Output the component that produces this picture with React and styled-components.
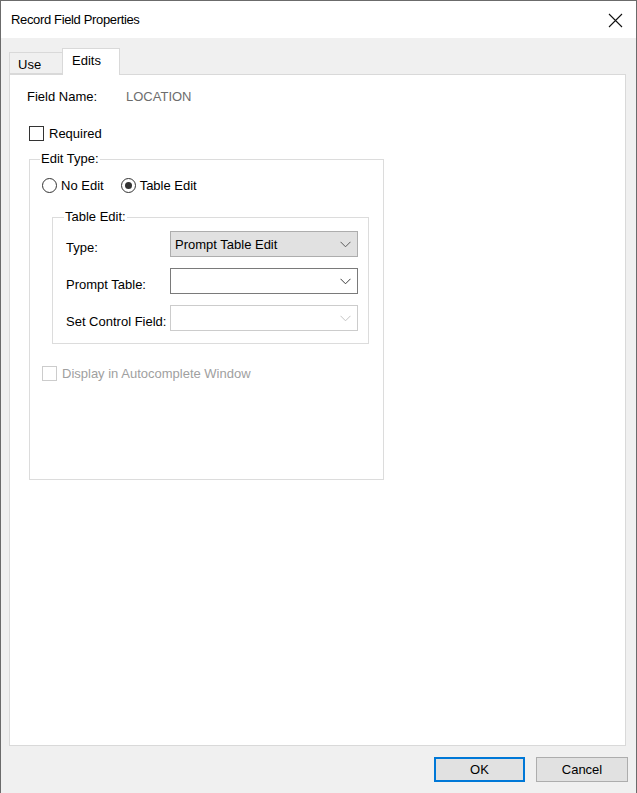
import React from 'react'
import styled, { createGlobalStyle } from 'styled-components'

const GlobalStyle = createGlobalStyle`
  html, body {
    margin: 0;
    padding: 0;
    background: #ffffff;
  }
  body {
    font-family: "Liberation Sans", Arial, sans-serif;
    font-size: 13px;
    color: #000;
  }
  * {
    box-sizing: border-box;
  }
`

const Chevron = ({ color }) => (
  <svg width="11" height="7" viewBox="0 0 11 7">
    <polyline points="0.5,0.8 5.5,5.8 10.5,0.8" fill="none" stroke={color} strokeWidth="1" />
  </svg>
)

const CloseIcon = () => (
  <svg width="15" height="15" viewBox="0 0 15 15">
    <path d="M1 1 L14 14 M14 1 L1 14" stroke="#111" strokeWidth="1.1" fill="none" />
  </svg>
)

const App = () => {
  return (
    <>
      <GlobalStyle />
      <Window>
        <TitleBar>
          <Title>Record Field Properties</Title>
          <CloseBtn>
            <CloseIcon />
          </CloseBtn>
        </TitleBar>
        <Body>
          <TabStrip>
            <Tab>Use</Tab>
            <Tab active>Edits</Tab>
          </TabStrip>
          <Panel>
            <FieldRow>
              <FieldLabel>Field Name:</FieldLabel>
              <FieldValue>LOCATION</FieldValue>
            </FieldRow>
            <CheckRow>
              <CheckBox />
              <span>Required</span>
            </CheckRow>

            <EditGroup>
              <Legend>Edit Type:</Legend>
              <RadioRow>
                <RadioItem>
                  <Radio />
                  <span>No Edit</span>
                </RadioItem>
                <RadioItem>
                  <Radio checked />
                  <span>Table Edit</span>
                </RadioItem>
              </RadioRow>

              <TableGroup>
                <Legend>Table Edit:</Legend>
                <SelectRow>
                  <RowLabel>Type:</RowLabel>
                  <Select variant="button">
                    <span>Prompt Table Edit</span>
                    <Chevron color="#5a5a5a" />
                  </Select>
                </SelectRow>
                <SelectRow>
                  <RowLabel>Prompt Table:</RowLabel>
                  <Select variant="field">
                    <span />
                    <Chevron color="#3c3c3c" />
                  </Select>
                </SelectRow>
                <SelectRow>
                  <RowLabel>Set Control Field:</RowLabel>
                  <Select variant="disabled">
                    <span />
                    <Chevron color="#c4c4c4" />
                  </Select>
                </SelectRow>
              </TableGroup>

              <CheckRow disabled>
                <CheckBox disabled />
                <span>Display in Autocomplete Window</span>
              </CheckRow>
            </EditGroup>
          </Panel>
          <ButtonBar>
            <Button primary>OK</Button>
            <Button>Cancel</Button>
          </ButtonBar>
        </Body>
      </Window>
    </>
  )
}

export default App

const Window = styled.div`
  width: 637px;
  height: 793px;
  display: flex;
  flex-direction: column;
  border: 1px solid #6b6b6b;
  border-bottom: none;
  background: #f0f0f0;
`
const TitleBar = styled.div`
  height: 37px;
  flex: none;
  background: #ffffff;
  display: flex;
  align-items: center;
  justify-content: space-between;
  padding: 0 13px 0 10px;
`
const Title = styled.div`
  font-size: 13px;
  letter-spacing: -0.35px;
  color: #000;
  padding-bottom: 1px;
`
const CloseBtn = styled.div`
  width: 15px;
  height: 15px;
  display: flex;
  margin-top: 1px;
`
const Body = styled.div`
  flex: 1;
  display: flex;
  flex-direction: column;
  padding: 10px 10px 11px 8px;
`
const TabStrip = styled.div`
  display: flex;
  align-items: flex-end;
  height: 26px;
  flex: none;
`
const Tab = styled.div`
  position: relative;
  width: ${(p) => (p.active ? '58px' : '54px')};
  height: ${(p) => (p.active ? '27px' : '22px')};
  margin-bottom: ${(p) => (p.active ? '-1px' : '0')};
  margin-left: ${(p) => (p.active ? '-1px' : '0')};
  padding: ${(p) => (p.active ? '4px 0 0 9px' : '4px 0 0 8px')};
  background: ${(p) => (p.active ? '#ffffff' : '#f0f0f0')};
  border: 1px solid #d9d9d9;
  border-bottom: ${(p) => (p.active ? 'none' : '1px solid #d9d9d9')};
  z-index: ${(p) => (p.active ? 2 : 1)};
  line-height: 15px;
`
const Panel = styled.div`
  flex: 1;
  background: #ffffff;
  border: 1px solid #d9d9d9;
  padding: 14px 0 0 19px;
  display: flex;
  flex-direction: column;
  align-items: flex-start;
`
const FieldRow = styled.div`
  display: flex;
  margin-left: -2px;
  line-height: 16px;
`
const FieldLabel = styled.span`
  width: 99px;
`
const FieldValue = styled.span`
  color: #6d6d6d;
`
const CheckRow = styled.div`
  display: flex;
  align-items: center;
  gap: 5px;
  height: 15px;
  margin-top: ${(p) => (p.disabled ? '22px' : '21px')};
  color: ${(p) => (p.disabled ? '#a0a0a0' : '#000')};
`
const CheckBox = styled.div`
  width: 15px;
  height: 15px;
  border: 1px solid ${(p) => (p.disabled ? '#cccccc' : '#333333')};
  background: #ffffff;
`
const EditGroup = styled.fieldset`
  width: 355px;
  margin: 10px 0 0 0;
  padding: 11px 12px 98px 12px;
  border: 1px solid #dcdcdc;
  min-inline-size: 0;
`
const Legend = styled.legend`
  padding: 0 1px;
  margin-left: -2px;
  line-height: 16px;
`
const RadioRow = styled.div`
  display: flex;
  align-items: center;
  gap: 17px;
  height: 15px;
`
const RadioItem = styled.div`
  display: flex;
  align-items: center;
  gap: 4px;
`
const Radio = styled.div`
  width: 15px;
  height: 15px;
  border-radius: 50%;
  border: 1px solid #333333;
  display: flex;
  align-items: center;
  justify-content: center;
  &::after {
    content: '';
    display: ${(p) => (p.checked ? 'block' : 'none')};
    width: 7px;
    height: 7px;
    border-radius: 50%;
    background: #333333;
  }
`
const TableGroup = styled.fieldset`
  width: 317px;
  margin: 16px 0 0 10px;
  padding: 6px 10px 12px 13px;
  border: 1px solid #dcdcdc;
  display: flex;
  flex-direction: column;
  gap: 11px;
  min-inline-size: 0;
`
const SelectRow = styled.div`
  display: flex;
  align-items: center;
`
const RowLabel = styled.span`
  width: 104px;
  padding-top: 6px;
  white-space: nowrap;
`
const selectLook = {
  button: { bg: '#e1e1e1', border: '#adadad' },
  field: { bg: '#ffffff', border: '#7a7a7a' },
  disabled: { bg: '#ffffff', border: '#cccccc' },
}
const Select = styled.div`
  width: 188px;
  height: 26px;
  display: flex;
  align-items: center;
  justify-content: space-between;
  padding: 0 6px 0 4px;
  background: ${(p) => selectLook[p.variant].bg};
  border: 1px solid ${(p) => selectLook[p.variant].border};
  svg {
    margin-top: 1px;
  }
`
const ButtonBar = styled.div`
  display: flex;
  justify-content: flex-end;
  gap: 11px;
  margin: 11px -2px 0 0;
  flex: none;
`
const Button = styled.div`
  width: ${(p) => (p.primary ? '91px' : '92px')};
  height: 25px;
  display: flex;
  align-items: center;
  justify-content: center;
  background: #e1e1e1;
  border: ${(p) => (p.primary ? '2px solid #0078d7' : '1px solid #adadad')};
  font-size: 13px;
`
